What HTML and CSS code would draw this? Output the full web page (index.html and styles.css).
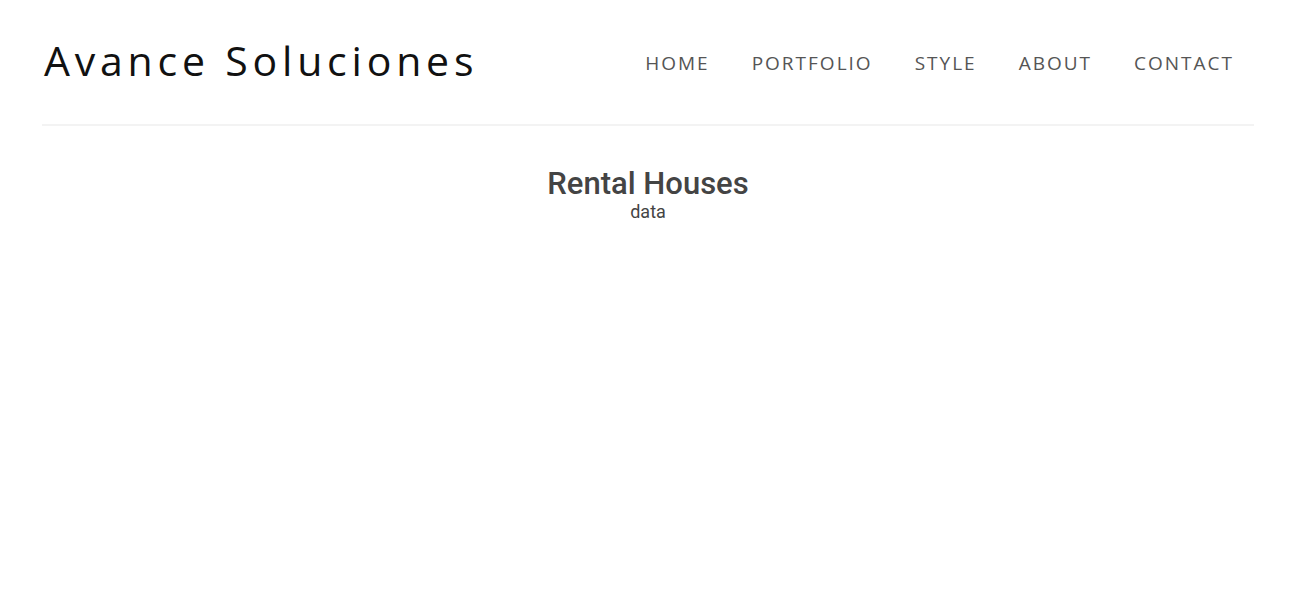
FILE: index.html
```html
<!DOCTYPE html>
<html lang="en">
<head>
<meta charset="utf-8">
<title>Avance Soluciones</title>
<link rel="stylesheet" href="styles.css">
</head>
<body>
<div class="page">
  <header class="site-header">
    <a class="brand" href="#">Avance Soluciones</a>
    <nav class="nav">
      <a href="#">HOME</a>
      <a href="#">PORTFOLIO</a>
      <a href="#">STYLE</a>
      <a href="#">ABOUT</a>
      <a href="#">CONTACT</a>
    </nav>
  </header>
  <main class="content">
    <h1 class="title">Rental Houses</h1>
    <p class="subtitle">data</p>
  </main>
</div>
</body>
</html>
```
FILE: styles.css
```css
html, body {
  margin: 0;
  padding: 0;
  background: #ffffff;
}
.page {
  padding: 0 41px 0 42px;
}
.site-header {
  display: flex;
  justify-content: space-between;
  align-items: center;
  height: 124px;
  border-bottom: 2px solid #f3f3f3;
}
.brand {
  font-family: "Open Sans", sans-serif;
  font-size: 41px;
  letter-spacing: 4.8px;
  color: #111;
  text-decoration: none;
  padding-left: 2px;
  margin-top: -4px;
}
.nav {
  display: flex;
  gap: 42px;
  padding-right: 20px;
  margin-top: 2px;
}
.nav a {
  font-family: "Open Sans", sans-serif;
  font-size: 19px;
  letter-spacing: 2px;
  color: #555;
  text-decoration: none;
}
.content {
  display: flex;
  flex-direction: column;
  align-items: center;
  padding-top: 40px;
}
.title {
  font-family: Roboto, sans-serif;
  font-weight: 500;
  font-size: 31px;
  color: #444;
  margin: 0;
  line-height: 35px;
}
.subtitle {
  font-family: Roboto, sans-serif;
  font-size: 18px;
  color: #444;
  margin: 0;
  line-height: 22px;
}
```
